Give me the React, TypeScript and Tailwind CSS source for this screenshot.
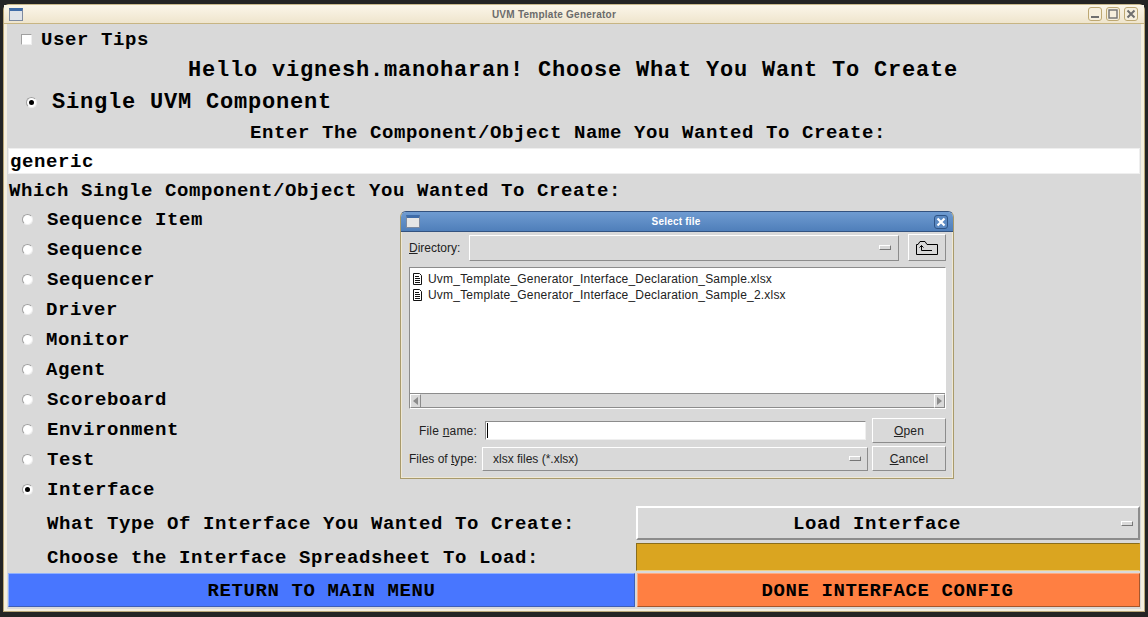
const mono = "font-['Liberation_Mono',monospace] font-bold text-[19px] tracking-[0.6px] text-black whitespace-pre";
const big = "font-['Liberation_Mono',monospace] font-bold text-[22px] tracking-[0.8px] text-black whitespace-pre";

const items = [
  { label: "Sequence Item", left: "pl-[14px]", on: false },
  { label: "Sequence", left: "pl-[14px]", on: false },
  { label: "Sequencer", left: "pl-[14px]", on: false },
  { label: "Driver", left: "pl-[13px]", on: false },
  { label: "Monitor", left: "pl-[13px]", on: false },
  { label: "Agent", left: "pl-[13px]", on: false },
  { label: "Scoreboard", left: "pl-[14px]", on: false },
  { label: "Environment", left: "pl-[14px]", on: false },
  { label: "Test", left: "pl-[14px]", on: false },
  { label: "Interface", left: "pl-[14px]", on: true },
];

function Radio({ on }: { on: boolean }) {
  return (
    <span className="flex h-[11px] w-[11px] shrink-0 items-center justify-center rounded-full border border-t-[#a0a0a0] border-l-[#a0a0a0] border-r-[#eeeeee] border-b-[#eeeeee] bg-white">
      {on && <span className="h-[5px] w-[5px] rounded-full bg-black" />}
    </span>
  );
}

function ComboMark() {
  return <span className="block h-[5px] w-[12px] border border-t-white border-l-white border-r-[#777] border-b-[#777] bg-[#d9d9d9]" />;
}

function WinIcon({ dark }: { dark?: boolean }) {
  return (
    <span className={`block h-[13px] w-[14px] border border-[#7d8aa0] ${dark ? "bg-[#dfe3e8]" : "bg-[#e6e6e6]"} border-t-[3px] border-t-[#3f6ca8]`} />
  );
}

function TitleButton({ kind }: { kind: "min" | "max" | "close" }) {
  return (
    <span className="flex h-[14px] w-[14px] items-center justify-center rounded-[3px] border border-[#bda873] bg-[#f6efdd]">
      <svg width="10" height="10" viewBox="0 0 10 10">
        {kind === "min" && <rect x="1" y="7" width="8" height="2" fill="#6f6f6f" />}
        {kind === "max" && <rect x="1" y="1" width="8" height="8" fill="none" stroke="#6f6f6f" strokeWidth="1.4" />}
        {kind === "close" && <path d="M1.5 1.5 L8.5 8.5 M8.5 1.5 L1.5 8.5" stroke="#6f6f6f" strokeWidth="2" />}
      </svg>
    </span>
  );
}

function FileIcon() {
  return (
    <svg width="11" height="12" viewBox="0 0 11 12" className="shrink-0">
      <path d="M1.5 0.5 H7.5 L9.5 2.5 V11.5 H1.5 Z" fill="#fff" stroke="#111" />
      <path d="M3 3.5 H7 M3 5.5 H8 M3 7.5 H8 M3 9.5 H8" stroke="#111" />
    </svg>
  );
}

function FileDialog() {
  const bevel = "border border-t-white border-l-white border-r-[#8c8c8c] border-b-[#8c8c8c] bg-[#d9d9d9]";
  const label = "text-[12px] tracking-[0.2px] text-[#222] whitespace-pre";
  const plain = "text-[12px] text-[#222] whitespace-pre";
  return (
    <div className="absolute left-[400px] top-[211px] flex h-[268px] w-[554px] flex-col overflow-hidden rounded-t-[6px] border border-[#a89a6c] border-t-[#33527f] bg-[#d9d9d9] font-['Liberation_Sans',sans-serif] shadow-[inset_0_0_0_1px_#efe8d4]">
      <div className="relative flex h-[20px] shrink-0 items-center justify-between border-b border-[#33527f] bg-gradient-to-b from-[#6f9bd1] to-[#4f7fba] pl-[5px] pr-[5px]">
        <WinIcon />
        <span className="absolute inset-x-0 pr-[2px] text-center text-[10px] font-bold tracking-[0.2px] text-white">Select file</span>
        <span className="relative flex h-[14px] w-[14px] items-center justify-center rounded-[3px] border border-[#2f5486] bg-[#5b89c2]">
          <svg width="10" height="10" viewBox="0 0 10 10">
            <path d="M1.5 1.5 L8.5 8.5 M8.5 1.5 L1.5 8.5" stroke="#fff" strokeWidth="2.2" />
          </svg>
        </span>
      </div>
      <div className="flex flex-1 flex-col pl-[8px] pr-[6px] pt-[2px]">
        <div className="flex h-[27px] items-center">
          <span className={`${plain} w-[60px]`}><u>D</u>irectory:</span>
          <div className={`${bevel} flex h-[26px] w-[430px] items-center justify-end pr-[7px]`}>
            <ComboMark />
          </div>
          <div className={`${bevel} ml-[9px] flex h-[27px] w-[38px] items-center justify-center`}>
            <svg width="22" height="14" viewBox="0 0 22 14">
              <path d="M0.5 13.5 V3.5 H2 L4 0.5 H9 L11 3.5 H21.5 V13.5 Z" fill="none" stroke="#000" />
              <path d="M5.5 4.5 V9.5 H16 M3.5 6.5 L5.5 4.5 L7.5 6.5" fill="none" stroke="#000" />
            </svg>
          </div>
        </div>
        <div className="mt-[6px] flex h-[142px] w-[537px] flex-col border border-t-[#8c8c8c] border-l-[#8c8c8c] border-r-white border-b-white bg-white">
          <div className="flex-1 pl-[2px] pt-[3px] text-[12px] leading-[16px] tracking-[0.2px] text-[#222]">
            {["Uvm_Template_Generator_Interface_Declaration_Sample.xlsx", "Uvm_Template_Generator_Interface_Declaration_Sample_2.xlsx"].map((f) => (
              <div key={f} className="flex items-center gap-[5px]">
                <FileIcon />
                <span>{f}</span>
              </div>
            ))}
          </div>
          <div className="flex h-[15px] border-t border-[#8c8c8c] bg-[#d9d9d9]">
            <span className={`${bevel} flex w-[11px] items-center justify-center`}>
              <span className="h-0 w-0 border-y-[4px] border-r-[5px] border-y-transparent border-r-[#8c8c8c]" />
            </span>
            <span className="flex-1 border-b border-[#8c8c8c]" />
            <span className={`${bevel} flex w-[11px] items-center justify-center`}>
              <span className="h-0 w-0 border-y-[4px] border-l-[5px] border-y-transparent border-l-[#8c8c8c]" />
            </span>
          </div>
        </div>
        <div className="mt-[9px] flex h-[25px] w-[537px] items-center">
          <span className={`${label} w-[68px] text-right`}>File <u>n</u>ame:</span>
          <div className="ml-[8px] flex h-[19px] w-[381px] items-center border border-t-[#8c8c8c] border-l-[#8c8c8c] border-r-[#efefef] border-b-[#efefef] bg-white pl-[1px]">
            <span className="h-[15px] w-px bg-black" />
          </div>
          <div className={`${bevel} ml-[6px] flex h-[25px] w-[74px] items-center justify-center ${label}`}>
            <span><u>O</u>pen</span>
          </div>
        </div>
        <div className="mt-[3px] flex h-[25px] w-[537px] items-center">
          <span className={`${plain} w-[68px] text-right`}>Files of <u>t</u>ype:</span>
          <div className={`${bevel} ml-[5px] flex h-[24px] w-[386px] items-center justify-between pl-[10px] pr-[6px] ${plain}`}>
            <span>xlsx files (*.xlsx)</span>
            <ComboMark />
          </div>
          <div className={`${bevel} ml-[4px] flex h-[25px] w-[74px] items-center justify-center ${label}`}>
            <span><u>C</u>ancel</span>
          </div>
        </div>
      </div>
    </div>
  );
}

export default function App() {
  return (
    <div className="relative h-[617px] w-[1148px] overflow-hidden bg-[#242424] px-[3px] pb-[5px] pt-[4px]">
      <div className="flex h-full flex-col rounded-t-[6px] border border-[#b9a677] border-t-[#c9b98c] bg-[#f5efdf]">
        <div className="relative flex h-[19px] shrink-0 items-center justify-between border-b border-[#c7b583] bg-gradient-to-b from-[#fbf6e9] to-[#efe5cd] pl-[5px] pr-[6px]">
          <WinIcon dark />
          <span className="absolute inset-x-0 pr-[40px] text-center font-['Liberation_Sans',sans-serif] text-[10px] font-bold tracking-[0.25px] text-[#6b6b6b]">UVM Template Generator</span>
          <div className="relative flex gap-[4px]">
            <TitleButton kind="min" />
            <TitleButton kind="max" />
            <TitleButton kind="close" />
          </div>
        </div>
        <div className="mx-[3px] mb-[2px] flex flex-1 flex-col bg-[#d9d9d9] px-px">
          <div className={`${mono} flex h-[31px] items-center pl-[13px]`}>
            <span className="mr-[9px] block h-[11px] w-[11px] border border-t-[#a0a0a0] border-l-[#a0a0a0] border-r-[#eee] border-b-[#eee] bg-white" />
            <span className="pt-[1px]">User Tips</span>
          </div>
          <div className={`${big} flex h-[30px] items-center justify-center pr-[2px]`}>
            <span className="pt-[1px]">Hello vignesh.manoharan! Choose What You Want To Create</span>
          </div>
          <div className={`${big} flex h-[34px] items-center gap-[15px] pl-[18px]`}>
            <Radio on />
            <span className="pt-[1px]">Single UVM Component</span>
          </div>
          <div className={`${mono} flex h-[29px] items-center justify-center pr-[12px]`}>
            <span>Enter The Component/Object Name You Wanted To Create:</span>
          </div>
          <div className={`${mono} flex h-[26px] shrink-0 items-center border border-[#efefef] bg-white pl-[1px]`}>
            <span className="pt-[3px]">generic</span>
          </div>
          <div className={`${mono} mt-[2px] flex h-[28px] items-center pl-px`}>
            <span className="pt-[3px]">Which Single Component/Object You Wanted To Create:</span>
          </div>
          <div className="flex flex-col">
            {items.map((it) => (
              <div key={it.label} className={`${mono} flex h-[30px] items-center pl-[14px]`}>
                <Radio on={it.on} />
                <span className={`${it.left} pt-[3px]`}>{it.label}</span>
              </div>
            ))}
          </div>
          <div className="mt-[2px] flex h-[34px] items-center">
            <span className={`${mono} w-[628px] pl-[39px] pt-[3px]`}>What Type Of Interface You Wanted To Create:</span>
            <div className={`${mono} relative flex h-[34px] flex-1 items-center justify-center border-2 border-t-white border-l-white border-r-[#8c8c8c] border-b-[#8c8c8c] pr-[22px]`}>
              <span className="pt-[3px]">Load Interface</span>
              <span className="absolute right-[5px] top-[13px]"><ComboMark /></span>
            </div>
          </div>
          <div className="flex h-[33px]">
            <span className={`${mono} w-[628px] self-center pl-[39px] pt-[3px]`}>Choose the Interface Spreadsheet To Load:</span>
            <div className="mt-[3px] h-[28px] flex-1 border border-[#8a6d1c] border-r-[#d9a520] border-b-[#f0d080] bg-[#daa520]" />
          </div>
          <div className="flex h-[34px] gap-[2px]">
            <div className={`${mono} flex w-[627px] items-center justify-center border border-[#3f5fb5] border-t-[#8fb0ff] border-l-[#8fb0ff] bg-[#4876ff]`}>
              <span className="pt-[3px]">RETURN TO MAIN MENU</span>
            </div>
            <div className={`${mono} flex flex-1 items-center justify-center border border-[#a5562c] border-t-[#ffab80] border-l-[#ffab80] bg-[#ff7f42] pr-[2px]`}>
              <span className="pt-[3px]">DONE INTERFACE CONFIG</span>
            </div>
          </div>
        </div>
      </div>
      <FileDialog />
    </div>
  );
}
